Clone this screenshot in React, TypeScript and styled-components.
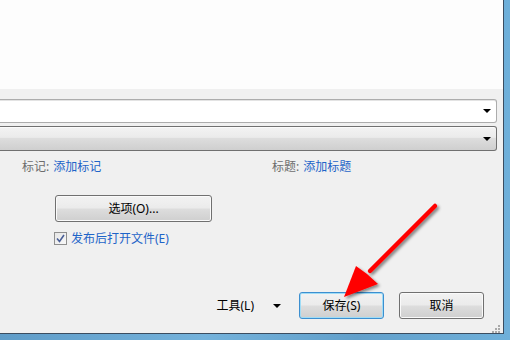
import { FC } from "react";
import styled, { createGlobalStyle } from "styled-components";

const GlobalStyle = createGlobalStyle`
   html, body {
      margin: 0;
      padding: 0;
      background: #f0f0f0;
   }
   body {
      font-family: "Noto Sans", "Noto Sans CJK SC", sans-serif;
      font-size: 12px;
      line-height: 16px;
   }
`;

const Frame = styled.div`
   position: relative;
   width: 510px;
   height: 340px;
   box-sizing: border-box;
   padding: 0 6px 6px 0;
   background: linear-gradient(90deg, #5f9cc8 0%, #74b2db 40%, #62a0cb 70%, #6fb0da 100%);
   overflow: hidden;
`;

const Client = styled.div`
   display: flex;
   flex-direction: column;
   width: 504px;
   height: 334px;
   box-sizing: border-box;
   border-right: 1px solid #3b4d60;
   border-bottom: 1px solid #3b4d60;
   background: #f0f0f0;
   overflow: hidden;
`;

const WhitePane = styled.div`
   height: 89px;
   background: #fdfdfd;
   flex-shrink: 0;
`;

const Fields = styled.div`
   display: flex;
   flex-direction: column;
   gap: 3px;
   margin-top: 10px;
   padding-right: 6px;
`;

const Field = styled.div<{ $combo?: boolean }>`
   display: flex;
   align-items: center;
   justify-content: flex-end;
   height: ${(p) => (p.$combo ? "25px" : "24px")};
   box-sizing: border-box;
   padding-right: 5px;
   border: 1px solid ${(p) => (p.$combo ? "#707070" : "#acacac")};
   border-left: none;
   border-radius: 0 3px 3px 0;
   background: ${(p) =>
      p.$combo
         ? "linear-gradient(180deg, #f3f3f3 0%, #ebebeb 45%, #dddddd 50%, #cfcfcf 100%)"
         : "#ffffff"};
   box-shadow: ${(p) => (p.$combo ? "inset 0 1px 0 #fbfbfb" : "inset 0 1px 0 #e3e3e3")};
`;

const DropArrow = styled.span`
   width: 0;
   height: 0;
   border-left: 4px solid transparent;
   border-right: 4px solid transparent;
   border-top: 4px solid #000000;
`;

const MetaRow = styled.div`
   display: grid;
   grid-template-columns: 250px auto;
   margin-top: 8px;
   padding-left: 22px;
   height: 17px;
   align-items: center;
`;

const MetaItem = styled.div`
   display: flex;
   gap: 4px;
`;

const MetaLabel = styled.span`
   color: #6d6d6d;
`;

const MetaLink = styled.span`
   color: #1e64c8;
`;

const Button = styled.div<{ $width: number; $default?: boolean }>`
   display: flex;
   align-items: center;
   justify-content: center;
   width: ${(p) => p.$width}px;
   height: 27px;
   box-sizing: border-box;
   border: 1px solid ${(p) => (p.$default ? "#3c8fd0" : "#707070")};
   border-radius: 3px;
   color: #000000;
   background: linear-gradient(180deg, #f2f2f2 0%, #ebebeb 48%, #dddddd 52%, #cfcfcf 100%);
   box-shadow: inset 0 0 0 1px ${(p) => (p.$default ? "#9fdcf6" : "#fafafa")};
`;

const OptionsWrap = styled.div`
   margin-top: 20px;
   padding-left: 55px;
`;

const CheckRow = styled.div`
   display: flex;
   align-items: center;
   gap: 4px;
   height: 13px;
   margin-top: 10px;
   padding-left: 54px;
   color: #1e64c8;
`;

const CheckBox = styled.span`
   display: flex;
   align-items: center;
   justify-content: center;
   width: 13px;
   height: 13px;
   box-sizing: border-box;
   border: 1px solid #8f8f8f;
   background: linear-gradient(135deg, #e6e6e6 0%, #f8f8f8 100%);
`;

const ActionRow = styled.div`
   display: flex;
   align-items: center;
   justify-content: flex-end;
   height: 27px;
   margin-top: 47px;
   padding-right: 19px;
`;

const Tools = styled.div`
   display: flex;
   align-items: center;
   gap: 19px;
   margin-right: 18px;
   color: #000000;
`;

const Buttons = styled.div`
   display: flex;
   gap: 15px;
`;

const Grip = styled.div`
   display: flex;
   justify-content: flex-end;
   padding: 4px 3px 0 0;
`;

const ArrowLayer = styled.svg`
   position: absolute;
   left: 0;
   top: 0;
   pointer-events: none;
`;

const Arrow: FC = () => (
   <ArrowLayer width="510" height="340" viewBox="0 0 510 340">
      <defs>
         <filter id="sh" x="-20%" y="-20%" width="140%" height="140%">
            <feDropShadow dx="2" dy="2" stdDeviation="1.6" floodColor="#000" floodOpacity="0.45" />
         </filter>
      </defs>
      <g filter="url(#sh)">
         <line x1="435" y1="206" x2="370" y2="271" stroke="#ff0000" strokeWidth="4.5" strokeLinecap="round" />
         <polygon points="344,297 356,266 367,274 378,284" fill="#ff0000" />
      </g>
   </ArrowLayer>
);

const GripDots: FC = () => (
   <svg width="10" height="10" viewBox="0 0 10 10">
      {[
         [8, 0],
         [8, 3],
         [5, 3],
         [8, 6],
         [5, 6],
         [2, 6],
      ].map(([x, y]) => (
         <rect key={`${x}-${y}`} x={x} y={y + 2} width="2" height="2" fill="#a9a9a9" />
      ))}
   </svg>
);

const App: FC = () => {
   return (
      <>
         <GlobalStyle />
         <Frame>
            <Client>
               <WhitePane />
               <Fields>
                  <Field>
                     <DropArrow />
                  </Field>
                  <Field $combo>
                     <DropArrow />
                  </Field>
               </Fields>
               <MetaRow>
                  <MetaItem>
                     <MetaLabel>标记:</MetaLabel>
                     <MetaLink>添加标记</MetaLink>
                  </MetaItem>
                  <MetaItem>
                     <MetaLabel>标题:</MetaLabel>
                     <MetaLink>添加标题</MetaLink>
                  </MetaItem>
               </MetaRow>
               <OptionsWrap>
                  <Button $width={157}>选项(O)...</Button>
               </OptionsWrap>
               <CheckRow>
                  <CheckBox>
                     <svg width="9" height="9" viewBox="0 0 9 9">
                        <path d="M1 4.5 L3.5 7.5 L8 1" fill="none" stroke="#4a5f97" strokeWidth="1.6" />
                     </svg>
                  </CheckBox>
                  发布后打开文件(E)
               </CheckRow>
               <ActionRow>
                  <Tools>
                     <span>工具(L)</span>
                     <DropArrow />
                  </Tools>
                  <Buttons>
                     <Button $width={85} $default>
                        保存(S)
                     </Button>
                     <Button $width={85}>取消</Button>
                  </Buttons>
               </ActionRow>
               <Grip>
                  <GripDots />
               </Grip>
            </Client>
            <Arrow />
         </Frame>
      </>
   );
};

export default App;
